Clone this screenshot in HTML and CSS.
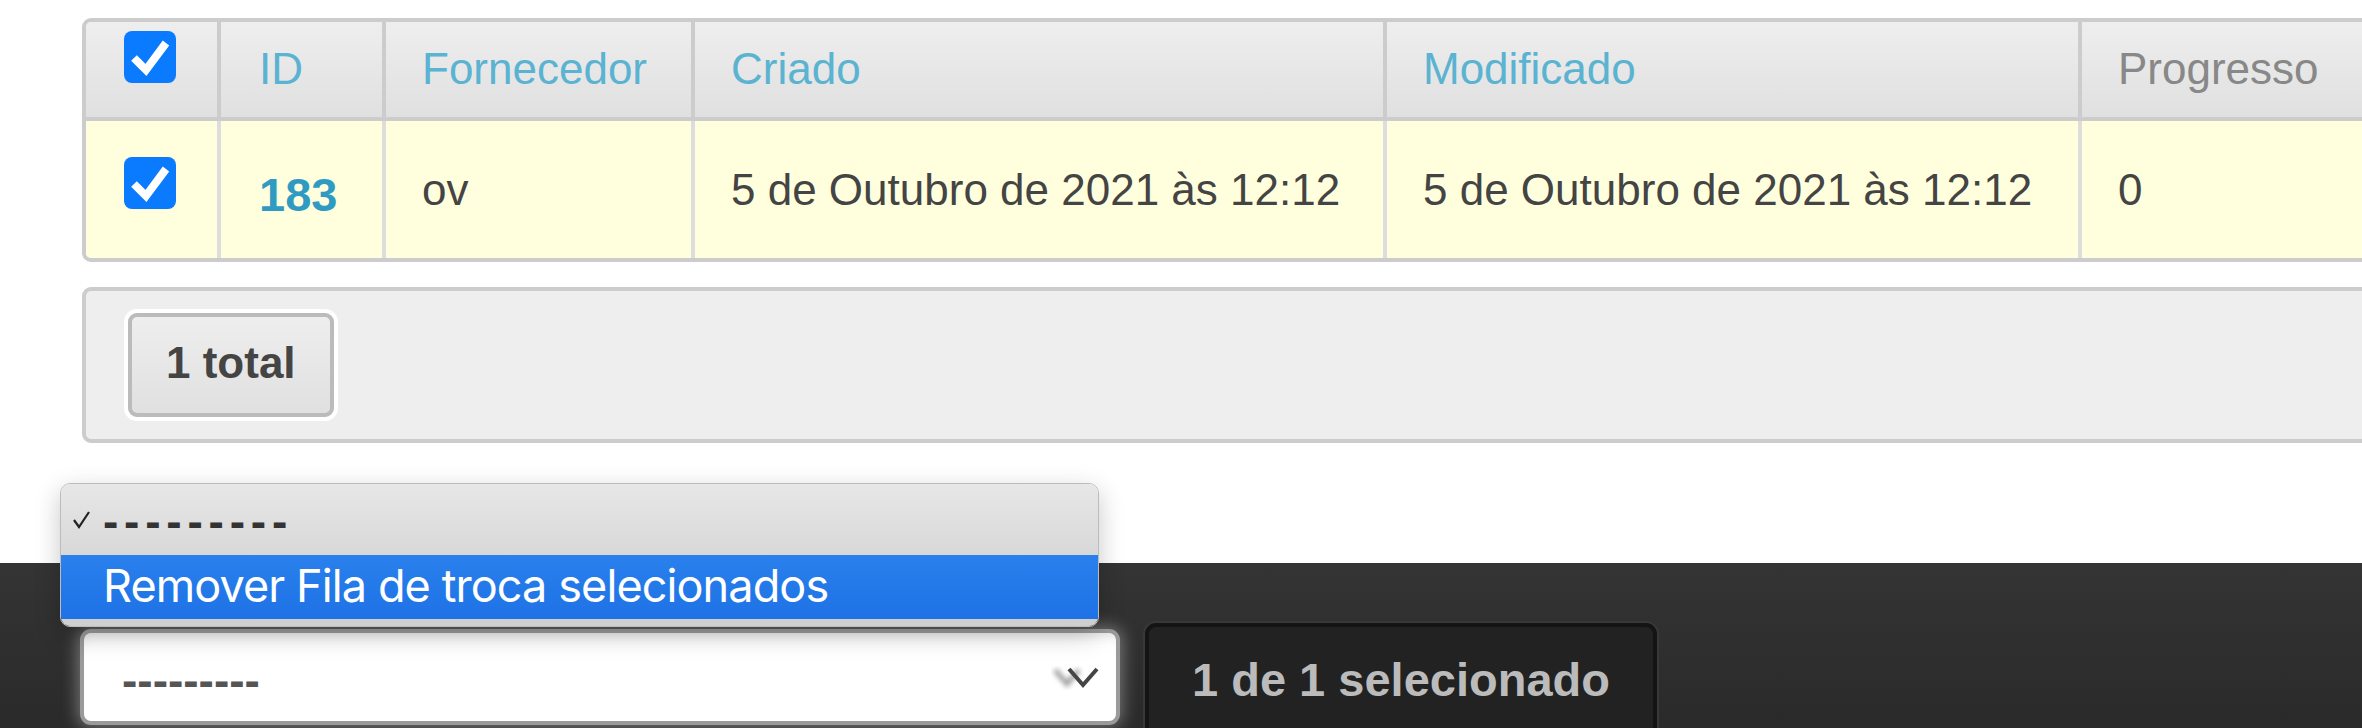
FILE: index.html
```html
<!DOCTYPE html>
<html lang="pt-BR">
<head>
<meta charset="utf-8">
<title>Fila de troca</title>
<link rel="stylesheet" href="styles.css">
</head>
<body>
<div class="page">
  <div class="results">
    <div class="row head">
      <div class="cell c-check">
        <span class="cb"><svg viewBox="0 0 52 52" width="52" height="52"><path d="M10 27 L22 39 L42 12" fill="none" stroke="#fff" stroke-width="8"/></svg></span>
      </div>
      <div class="cell c-id"><a class="sort">ID</a></div>
      <div class="cell"><a class="sort">Fornecedor</a></div>
      <div class="cell"><a class="sort">Criado</a></div>
      <div class="cell"><a class="sort">Modificado</a></div>
      <div class="cell last"><span class="plain">Progresso</span></div>
    </div>
    <div class="row body selected">
      <div class="cell c-check">
        <span class="cb"><svg viewBox="0 0 52 52" width="52" height="52"><path d="M10 27 L22 39 L42 12" fill="none" stroke="#fff" stroke-width="8"/></svg></span>
      </div>
      <div class="cell c-id"><a class="idlink">183</a></div>
      <div class="cell">ov</div>
      <div class="cell">5 de Outubro de 2021 às 12:12</div>
      <div class="cell">5 de Outubro de 2021 às 12:12</div>
      <div class="cell last">0</div>
    </div>
  </div>
  <div class="paginator">
    <span class="this-page">1 total</span>
  </div>
</div>
<div class="actions">
  <div class="select">
    <span class="select-value">---------</span>
    <svg class="chev" viewBox="0 0 52 24" width="52" height="24">
      <polyline class="ghost" points="4,4 16,18 28,4" fill="none" stroke="#555" stroke-width="5"/>
      <polyline points="18,3 32,19 46,3" fill="none" stroke="#444" stroke-width="4"/>
    </svg>
  </div>
  <button class="go">1 de 1 selecionado</button>
  <div class="popup">
    <div class="opt current">
      <svg class="tick" viewBox="0 0 20 20" width="20" height="20"><polyline points="2,10 7,17 17,2" fill="none" stroke="#222" stroke-width="2.2"/></svg>
      <span class="dashes">---------</span>
    </div>
    <div class="opt hl">Remover Fila de troca selecionados</div>
    <div class="tail"></div>
  </div>
</div>
</body>
</html>
```
FILE: styles.css
```css
html, body {
  margin: 0;
  padding: 0;
}
body {
  width: 2362px;
  height: 728px;
  overflow: hidden;
  background: #fff;
  color: #444;
  font-family: "Liberation Sans", Arial, sans-serif;
}

.page {
  box-sizing: border-box;
  height: 563px;
  padding: 18px 0 0 82px;
}

.results {
  width: 2300px;
  border: 4px solid #ccc;
  border-radius: 9px;
  overflow: hidden;
  background: #ffd;
}

.row {
  display: grid;
  grid-template-columns: 135px 165px 309px 692px 695px 1fr;
}

.cell {
  box-sizing: border-box;
  padding-left: 36px;
  font-size: 44px;
  line-height: 44px;
  white-space: nowrap;
}

.head {
  box-sizing: border-box;
  height: 99px;
  border-bottom: 4px solid #ccc;
  background: linear-gradient(#eee, #e0e0e0);
}
.head .cell {
  border-right: 4px solid #ccc;
  padding-top: 25px;
}
.head .c-check {
  padding-top: 9px;
}

.body {
  height: 137px;
  background: #ffd;
}
.body .cell {
  border-right: 4px solid #ddd;
  padding-top: 47px;
  color: #444;
}
.body .c-check {
  padding-top: 36px;
}

.cell.last {
  border-right: none;
}
.c-check {
  padding-left: 38px;
}
.c-id {
  padding-left: 38px;
}

.cb {
  display: block;
  width: 52px;
  height: 52px;
  border-radius: 8px;
  background: #0a7aff;
}
.cb svg {
  display: block;
}

.sort {
  color: #5ab3d1;
  text-decoration: none;
}
.plain {
  color: #888;
}
.body .c-id {
  padding-top: 50px;
}
.idlink {
  color: #309bc2;
  font-weight: bold;
  font-size: 47px;
  line-height: 47px;
}

.paginator {
  box-sizing: border-box;
  width: 2300px;
  height: 156px;
  margin-top: 25px;
  padding: 22px 0 0 42px;
  border: 4px solid #ccc;
  border-radius: 9px;
  background: #eee;
}
.this-page {
  display: inline-block;
  box-sizing: border-box;
  height: 104px;
  padding: 24px 34px 0;
  border: 4px solid #bbb;
  border-radius: 9px;
  background: linear-gradient(#eee, #e0e0e0);
  box-shadow: 0 0 0 4px #fff;
  color: #444;
  font-weight: bold;
  font-size: 44px;
  line-height: 44px;
}

.actions {
  position: relative;
  box-sizing: border-box;
  height: 165px;
  padding: 60px 0 0 80px;
  display: flex;
  align-items: flex-start;
  gap: 25px;
  background: linear-gradient(#343434, #2a2a2a);
}

.select {
  box-sizing: border-box;
  width: 1040px;
  height: 96px;
  margin-top: 6px;
  padding: 0 13px 0 38px;
  display: flex;
  align-items: center;
  justify-content: space-between;
  border: 4px solid #9a9a9a;
  border-radius: 11px;
  background: #fff;
  box-shadow: 0 0 16px 3px rgba(200, 200, 200, 0.45), inset 0 10px 12px -8px rgba(0, 0, 0, 0.12);
}
.select-value {
  color: #555;
  font-weight: bold;
  font-size: 46px;
  line-height: 46px;
  padding-top: 6px;
}
.chev {
  display: block;
  margin-top: 2px;
}
.chev .ghost {
  filter: blur(2.5px);
  opacity: 0.55;
}

.go {
  box-sizing: border-box;
  width: 512px;
  margin: 0;
  padding: 29px 0 44px;
  border: 4px solid #141414;
  border-radius: 11px;
  background: #222;
  box-shadow: 0 0 0 2px #383838;
  color: #bbb;
  font-family: "Liberation Sans", Arial, sans-serif;
  font-weight: bold;
  font-size: 47px;
  line-height: 47px;
  text-align: center;
}

.popup {
  position: absolute;
  left: 60px;
  top: -80px;
  box-sizing: border-box;
  width: 1039px;
  height: 144px;
  border: 1px solid #bcbcbc;
  border-radius: 10px;
  overflow: hidden;
  box-shadow: 0 8px 26px rgba(0, 0, 0, 0.22);
  font-family: Inter, "Liberation Sans", Arial, sans-serif;
}
.opt.current {
  height: 71px;
  display: flex;
  align-items: center;
  background: linear-gradient(#e7e7e7, #d8d8d8);
  color: #222;
}
.tick {
  display: block;
  margin-left: 11px;
  margin-right: 11px;
}
.dashes {
  font-family: "Liberation Sans", Arial, sans-serif;
  font-weight: bold;
  font-size: 46px;
  line-height: 46px;
  letter-spacing: 5.8px;
  color: #333;
  padding-top: 2px;
}
.opt.hl {
  height: 64px;
  padding-left: 42px;
  background: linear-gradient(#2a80ec, #1e72e6);
  color: #fff;
  font-size: 45px;
  line-height: 62px;
  letter-spacing: -0.9px;
  white-space: nowrap;
}
.tail {
  height: 8px;
  background: #cfcfcf;
}
```
